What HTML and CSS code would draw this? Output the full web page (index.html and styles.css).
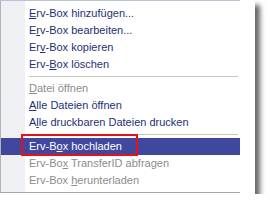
FILE: index.html
```html
<!DOCTYPE html>
<html>
<head>
<meta charset="utf-8">
<link rel="stylesheet" href="styles.css">
</head>
<body>
<div class="frame">
  <div class="menu">
    <div class="item"><u>E</u>rv-Box hinzufügen...</div>
    <div class="item">E<u>r</u>v-Box bearbeiten...</div>
    <div class="item">Er<u>v</u>-Box kopieren</div>
    <div class="item">Erv-<u>B</u>ox löschen</div>
    <div class="sep"></div>
    <div class="item disabled"><u>D</u>atei öffnen</div>
    <div class="item"><u>A</u>lle Dateien öffnen</div>
    <div class="item">A<u>l</u>le druckbaren Dateien drucken</div>
    <div class="sep"></div>
    <div class="item hl">Erv-B<u>o</u>x hochladen</div>
    <div class="item disabled">Erv-Bo<u>x</u> TransferID abfragen</div>
    <div class="item disabled">Erv-Box <u>h</u>erunterladen</div>
  </div>
  <div class="mark"></div>
</div>
</body>
</html>
```
FILE: styles.css
```css
html, body {
  margin: 0;
  padding: 0;
  background: #ffffff;
}
.frame {
  position: relative;
  width: 255px;
  height: 194px;
  background: #ffffff;
  box-shadow: 5px 5px 5px rgba(0, 0, 0, 0.6);
}
.menu {
  width: 239px;
  border-left: 1px solid #b4b4b4;
  border-top: 1px solid #b9c3d6;
  border-bottom: 1px solid #a8a8a8;
  background: linear-gradient(to right, #eff0f4 0, #eff0f4 24px, #ffffff 24px);
  padding-top: 4px;
  padding-bottom: 3px;
  font-family: "Liberation Sans", Arial, sans-serif;
  font-size: 11px;
}
.item {
  height: 17px;
  line-height: 17px;
  padding-left: 28px;
  color: #1c3175;
  white-space: nowrap;
}
.item u {
  text-underline-offset: 1px;
}
.item.disabled {
  color: #8c8c8c;
}
.item.hl {
  background: #3f479e;
  color: #ffffff;
}
.sep {
  height: 7px;
  margin-left: 28px;
  margin-right: 2px;
  background: linear-gradient(#c6c6c6, #c6c6c6) no-repeat 0 3px / 100% 1px;
}
.mark {
  position: absolute;
  left: 21px;
  top: 134px;
  width: 113px;
  height: 18px;
  border: 2.5px solid #e81010;
}
```
